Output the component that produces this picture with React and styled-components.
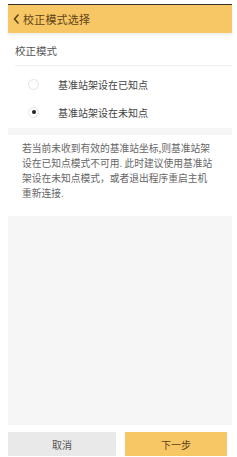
import React from "react";
import styled, { createGlobalStyle } from "styled-components";

const Global = createGlobalStyle`
  html, body { margin: 0; padding: 0; background: #ffffff; }
  body { font-family: "Noto Sans CJK SC", "Noto Sans", sans-serif; }
  * { box-sizing: border-box; }
`;

const Page = styled.div`
  width: 237px;
  height: 457px;
  padding: 4px 5px 1px 8px;
  background: #ffffff;
  display: flex;
  flex-direction: column;
`;

const Screen = styled.div`
  flex: 1;
  display: flex;
  flex-direction: column;
  background: #f6f6f6;
  min-height: 0;
`;

const TopLine = styled.div`
  height: 1px;
  background: #3b3226;
`;

const Header = styled.div`
  height: 28px;
  background: #f8c765;
  display: flex;
  align-items: center;
  padding-left: 5px;
  gap: 4px;
  color: #5e4419;
  font-size: 11px;
  box-shadow: 0 2px 3px rgba(0, 0, 0, 0.08);
  position: relative;
  z-index: 1;
`;

const Title = styled.span`
  line-height: 1;
  letter-spacing: 0.2px;
`;

const Card = styled.div`
  background: #ffffff;
  padding: ${(p) => p.$pad};
`;

const Gap = styled.div`
  height: ${(p) => p.$h}px;
`;

const Label = styled.div`
  font-size: 10.5px;
  color: #555555;
  line-height: 1;
  padding-top: 13px;
  margin-left: 7px;
  height: 33px;
  border-bottom: 1px solid #eeeeee;
`;

const RadioRow = styled.div`
  display: flex;
  align-items: center;
  height: 28px;
  padding-left: 20px;
  font-size: 10px;
  color: #444444;
`;

const Radio = styled.span`
  width: 11px;
  height: 11px;
  border-radius: 50%;
  border: 1px solid #e4e4e4;
  display: flex;
  align-items: center;
  justify-content: center;
  margin-right: 19px;
  &::after {
    content: "";
    width: 4px;
    height: 4px;
    border-radius: 50%;
    background: ${(p) => (p.$on ? "#222222" : "transparent")};
  }
`;

const Para = styled.p`
  margin: 0;
  font-size: 9.75px;
  line-height: 15px;
  color: #666666;
`;

const Spacer = styled.div`
  flex: 1;
`;

const Footer = styled.div`
  background: #ffffff;
  padding: 7px 5px 0 0;
  display: flex;
  gap: 9px;
`;

const Button = styled.div`
  height: 24px;
  width: ${(p) => p.$w}px;
  background: ${(p) => (p.$primary ? "#f8c765" : "#e9e9e9")};
  color: ${(p) => (p.$primary ? "#5a4220" : "#555555")};
  font-size: 10px;
  display: flex;
  align-items: center;
  justify-content: center;
  border-radius: 1px;
`;

const Chevron = () => (
  <svg width="6" height="10" viewBox="0 0 6 10">
    <path d="M5 1 L1.5 5 L5 9" fill="none" stroke="#5e4419" strokeWidth="1.6" strokeLinecap="round" strokeLinejoin="round" />
  </svg>
);

export default function App() {
  return (
    <>
      <Global />
      <Page>
        <Screen>
          <TopLine />
          <Header>
            <Chevron />
            <Title>校正模式选择</Title>
          </Header>
          <Card $pad="0 0 2px 0">
            <Label>校正模式</Label>
            <RadioRow style={{ marginTop: 4 }}>
              <Radio />
              基准站架设在已知点
            </RadioRow>
            <RadioRow>
              <Radio $on />
              基准站架设在未知点
            </RadioRow>
          </Card>
          <Gap $h={7} />
          <Card $pad="6px 10px 15px 14px">
            <Para>
              若当前未收到有效的基准站坐标,则基准站架
              <br />
              设在已知点模式不可用. 此时建议使用基准站
              <br />
              架设在未知点模式，或者退出程序重启主机
              <br />
              重新连接.
            </Para>
          </Card>
          <Spacer />
          <Footer>
            <Button $w={108}>取消</Button>
            <Button $w={102} $primary>下一步</Button>
          </Footer>
        </Screen>
      </Page>
    </>
  );
}
